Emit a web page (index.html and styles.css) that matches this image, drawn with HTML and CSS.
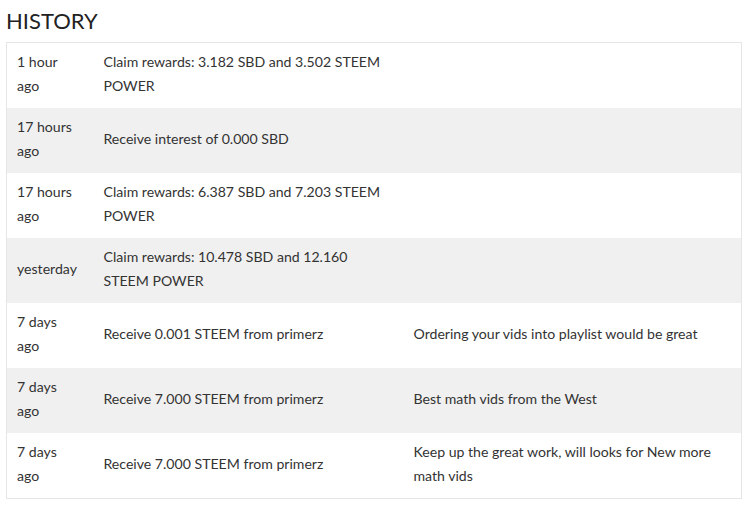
FILE: index.html
```html
<!DOCTYPE html>
<html>
<head>
<meta charset="utf-8">
<link rel="stylesheet" href="styles.css">
</head>
<body>
<div class="page">
  <h2 class="title">HISTORY</h2>
  <table class="history">
    <colgroup><col class="c-time"><col class="c-op"><col class="c-memo"></colgroup>
    <tbody>
      <tr><td>1 hour ago</td><td>Claim rewards: 3.182 SBD and 3.502 STEEM POWER</td><td></td></tr>
      <tr><td>17 hours ago</td><td>Receive interest of 0.000 SBD</td><td></td></tr>
      <tr><td>17 hours ago</td><td>Claim rewards: 6.387 SBD and 7.203 STEEM POWER</td><td></td></tr>
      <tr><td>yesterday</td><td>Claim rewards: 10.478 SBD and 12.160 STEEM POWER</td><td></td></tr>
      <tr><td>7 days ago</td><td>Receive 0.001 STEEM from primerz</td><td>Ordering your vids into playlist would be great</td></tr>
      <tr><td>7 days ago</td><td>Receive 7.000 STEEM from primerz</td><td>Best math vids from the West</td></tr>
      <tr><td>7 days ago</td><td>Receive 7.000 STEEM from primerz</td><td>Keep up the great work, will looks for New more math vids</td></tr>
    </tbody>
  </table>
</div>
</body>
</html>
```
FILE: styles.css
```css
html, body { margin: 0; padding: 0; background: #fff; }
body { font-family: "Lato", "Liberation Sans", sans-serif; color: #333; }
.page { padding: 6px 6px 0 6px; }
.title { margin: 0; padding-top: 2px; font-size: 22px; font-weight: 400; line-height: 26px; color: #222; height: 34px; }
.history { width: 736px; border-collapse: collapse; border: 1px solid #e6e6e6; table-layout: fixed; font-size: 14.1px; line-height: 24px; }
.c-time { width: 87px; }
.c-op { width: 310px; }
.history td { padding: 7px 10px 10px 10px; vertical-align: middle; height: 48px; }
.history td:first-child { padding-right: 14px; }
.history tr:nth-child(even) td { background: #f0f0f0; }
```
